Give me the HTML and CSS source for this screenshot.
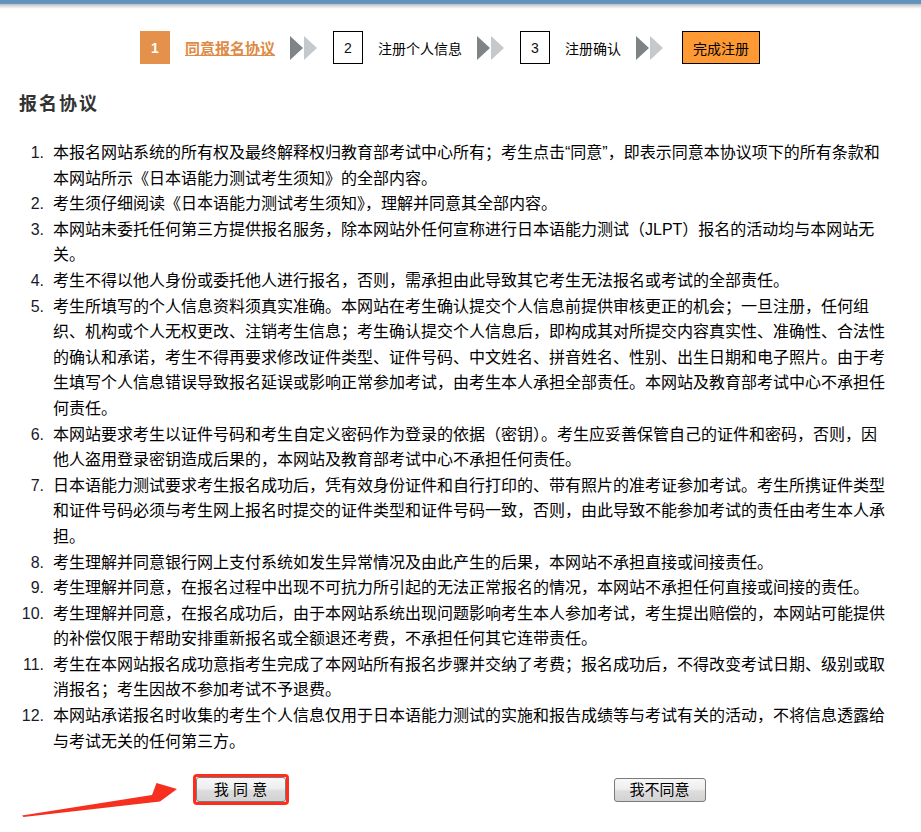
FILE: index.html
```html
<!DOCTYPE html>
<html lang="zh-CN">
<head>
<meta charset="utf-8">
<title>报名协议</title>
<link rel="stylesheet" href="styles.css">
</head>
<body>
<div class="topbar"></div>

<div class="steps">
  <span class="step-num step-num--active">1</span>
  <a class="step-label step-label--active" href="#">同意报名协议</a>
  <svg class="step-arrow" width="28" height="24" viewBox="0 0 28 24"><polygon points="0,0 13,12 0,24" fill="#7e8386"/><polygon points="14,0 27,12 14,24" fill="#c4c9cb"/></svg>
  <span class="step-num">2</span>
  <span class="step-label">注册个人信息</span>
  <svg class="step-arrow" width="28" height="24" viewBox="0 0 28 24"><polygon points="0,0 13,12 0,24" fill="#7e8386"/><polygon points="14,0 27,12 14,24" fill="#c4c9cb"/></svg>
  <span class="step-num">3</span>
  <span class="step-label">注册确认</span>
  <svg class="step-arrow" width="28" height="24" viewBox="0 0 28 24"><polygon points="0,0 13,12 0,24" fill="#7e8386"/><polygon points="14,0 27,12 14,24" fill="#c4c9cb"/></svg>
  <span class="step-done">完成注册</span>
</div>

<h2 class="title">报名协议</h2>

<ol class="terms">
  <li>本报名网站系统的所有权及最终解释权归教育部考试中心所有；考生点击“同意”，即表示同意本协议项下的所有条款和本网站所示《日本语能力测试考生须知》的全部内容。</li>
  <li>考生须仔细阅读《日本语能力测试考生须知》，理解并同意其全部内容。</li>
  <li>本网站未委托任何第三方提供报名服务，除本网站外任何宣称进行日本语能力测试（JLPT）报名的活动均与本网站无关。</li>
  <li>考生不得以他人身份或委托他人进行报名，否则，需承担由此导致其它考生无法报名或考试的全部责任。</li>
  <li>考生所填写的个人信息资料须真实准确。本网站在考生确认提交个人信息前提供审核更正的机会；一旦注册，任何组织、机构或个人无权更改、注销考生信息；考生确认提交个人信息后，即构成其对所提交内容真实性、准确性、合法性的确认和承诺，考生不得再要求修改证件类型、证件号码、中文姓名、拼音姓名、性别、出生日期和电子照片。由于考生填写个人信息错误导致报名延误或影响正常参加考试，由考生本人承担全部责任。本网站及教育部考试中心不承担任何责任。</li>
  <li>本网站要求考生以证件号码和考生自定义密码作为登录的依据（密钥）。考生应妥善保管自己的证件和密码，否则，因他人盗用登录密钥造成后果的，本网站及教育部考试中心不承担任何责任。</li>
  <li>日本语能力测试要求考生报名成功后，凭有效身份证件和自行打印的、带有照片的准考证参加考试。考生所携证件类型和证件号码必须与考生网上报名时提交的证件类型和证件号码一致，否则，由此导致不能参加考试的责任由考生本人承担。</li>
  <li>考生理解并同意银行网上支付系统如发生异常情况及由此产生的后果，本网站不承担直接或间接责任。</li>
  <li>考生理解并同意，在报名过程中出现不可抗力所引起的无法正常报名的情况，本网站不承担任何直接或间接的责任。</li>
  <li>考生理解并同意，在报名成功后，由于本网站系统出现问题影响考生本人参加考试，考生提出赔偿的，本网站可能提供的补偿仅限于帮助安排重新报名或全额退还考费，不承担任何其它连带责任。</li>
  <li>考生在本网站报名成功意指考生完成了本网站所有报名步骤并交纳了考费；报名成功后，不得改变考试日期、级别或取消报名；考生因故不参加考试不予退费。</li>
  <li>本网站承诺报名时收集的考生个人信息仅用于日本语能力测试的实施和报告成绩等与考试有关的活动，不将信息透露给与考试无关的任何第三方。</li>
</ol>

<div class="actions">
  <div class="action-cell"><span class="highlight"><button class="btn btn--agree" type="button">我 同 意</button></span></div>
  <div class="action-cell"><button class="btn" type="button">我不同意</button></div>
</div>

<svg class="pointer" width="190" height="50" viewBox="0 770 190 50"><polygon points="22,815.5 152,795 156.5,783 177,789 160,801.5 23.5,817" fill="#f62f1f"/></svg>
</body>
</html>
```

FILE: styles.css
```css
html, body {
  margin: 0;
  padding: 0;
  background: #ffffff;
}

body {
  font-family: "Liberation Sans", "Noto Sans CJK SC", sans-serif;
  color: #000;
  font-size: 16px;
}

.topbar {
  height: 9px;
  background: linear-gradient(#5f90bb 0, #6a98c1 4px, #b9bcbf 4px, #d9dadb 6px, #ffffff 9px);
}

.steps {
  display: flex;
  align-items: center;
  gap: 15px;
  margin: 22px 0 0;
  padding-left: 140px;
  height: 33px;
  font-size: 14px;
}

.step-num {
  box-sizing: border-box;
  width: 30px;
  height: 33px;
  border: 1px solid #000;
  background: #fff;
  display: flex;
  align-items: center;
  justify-content: center;
  font-size: 14px;
  color: #111;
}

.step-num--active {
  background: #e3914b;
  border-color: #e3914b;
  color: #fff;
  font-weight: bold;
}

.step-label {
  font-size: 14px;
  color: #000;
}

.step-label--active {
  color: #e08a45;
  font-weight: bold;
  font-size: 15px;
  text-decoration: underline;
}

.step-arrow {
  display: block;
}

.step-done {
  box-sizing: border-box;
  margin-left: 3px;
  height: 33px;
  padding: 0 10px;
  display: flex;
  align-items: center;
  background: #ff9933;
  border: 1px solid #000;
  font-size: 14px;
}

.title {
  margin: 27px 0 0;
  padding-left: 19px;
  font-size: 18px;
  line-height: 26px;
  letter-spacing: 2px;
  color: #333;
  font-weight: bold;
}

.terms {
  list-style: none;
  counter-reset: term;
  margin: 23px 0 0;
  padding: 0 0 0 19px;
  font-size: 16px;
  line-height: 25.6px;
}

.terms li {
  counter-increment: term;
  display: grid;
  grid-template-columns: 34px 832px;
}

.terms li::before {
  content: counter(term) ".";
  text-align: right;
  padding-right: 9px;
  color: #1a1a2a;
}

.actions {
  display: grid;
  grid-template-columns: 419px 419px;
  margin: 20px 0 0 31px;
  align-items: center;
  justify-items: center;
}

.highlight {
  display: inline-block;
  border: 3px solid #ff2d1c;
  border-radius: 4px;
  line-height: 0;
}

.btn {
  box-sizing: border-box;
  height: 24px;
  width: 92px;
  padding: 0;
  border: 1px solid #7a7a7a;
  border-radius: 3px;
  background: linear-gradient(#f8f8f8 0%, #eeeeee 45%, #dddddd 55%, #d2d2d2 100%);
  font-family: "Liberation Sans", "Noto Sans CJK SC", sans-serif;
  font-size: 15px;
  line-height: 20px;
  color: #000;
}

.btn--agree {
  width: 90px;
  height: 25px;
}

.pointer {
  position: absolute;
  left: 0;
  top: 770px;
}
```
